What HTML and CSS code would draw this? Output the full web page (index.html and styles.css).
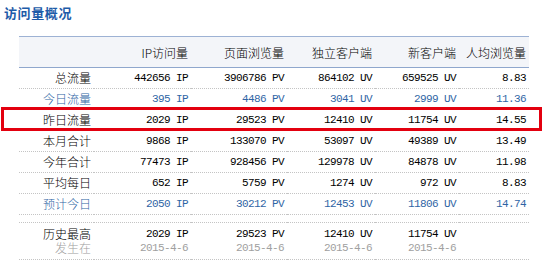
FILE: index.html
```html
<!DOCTYPE html>
<html lang="zh">
<head>
<meta charset="utf-8">
<title>访问量概况</title>
<link rel="stylesheet" href="styles.css">
</head>
<body>
<div class="page">
  <h1 class="title">访问量概况</h1>
  <table class="stats">
    <colgroup>
      <col class="c1"><col class="c2"><col class="c3"><col class="c4"><col class="c5"><col class="c6">
    </colgroup>
    <thead>
      <tr><th></th><th>IP访问量</th><th>页面浏览量</th><th>独立客户端</th><th>新客户端</th><th>人均浏览量</th></tr>
    </thead>
    <tbody>
      <tr><td class="label">总流量</td><td>442656 IP</td><td>3906786 PV</td><td>864102 UV</td><td>659525 UV</td><td>8.83</td></tr>
      <tr class="blue"><td class="label">今日流量</td><td>395 IP</td><td>4486 PV</td><td>3041 UV</td><td>2999 UV</td><td>11.36</td></tr>
      <tr><td class="label">昨日流量</td><td>2029 IP</td><td>29523 PV</td><td>12410 UV</td><td>11754 UV</td><td>14.55</td></tr>
      <tr><td class="label">本月合计</td><td>9868 IP</td><td>133070 PV</td><td>53097 UV</td><td>49389 UV</td><td>13.49</td></tr>
      <tr><td class="label">今年合计</td><td>77473 IP</td><td>928456 PV</td><td>129978 UV</td><td>84878 UV</td><td>11.98</td></tr>
      <tr><td class="label">平均每日</td><td>652 IP</td><td>5759 PV</td><td>1274 UV</td><td>972 UV</td><td>8.83</td></tr>
      <tr class="blue"><td class="label">预计今日</td><td>2050 IP</td><td>30212 PV</td><td>12453 UV</td><td>11806 UV</td><td>14.74</td></tr>
      <tr class="spacer"><td colspan="6"></td></tr>
      <tr class="record">
        <td class="label"><span class="main">历史最高</span><span class="sub">发生在</span></td>
        <td><span class="main">2029 IP</span><span class="sub">2015-4-6</span></td>
        <td><span class="main">29523 PV</span><span class="sub">2015-4-6</span></td>
        <td><span class="main">12410 UV</span><span class="sub">2015-4-6</span></td>
        <td><span class="main">11754 UV</span><span class="sub">2015-4-6</span></td>
        <td></td>
      </tr>
    </tbody>
  </table>
  <div class="highlight"></div>
</div>
</body>
</html>
```

FILE: styles.css
```css
html, body {
  margin: 0;
  padding: 0;
  background: #ffffff;
}

.page {
  position: relative;
  width: 545px;
  height: 262px;
  overflow: hidden;
  font-family: "Noto Sans CJK SC", "Liberation Sans", sans-serif;
  font-size: 12px;
  color: #000;
}

.title {
  margin: 0;
  padding: 5px 0 0 4px;
  font-size: 13px;
  letter-spacing: 0.6px;
  line-height: 16px;
  font-weight: bold;
  color: #1d5ba8;
}

.stats {
  margin: 15px 0 0 19px;
  width: 510px;
  border-collapse: collapse;
  table-layout: fixed;
}

.c1 { width: 75px; }
.c2 { width: 97px; }
.c3 { width: 96px; }
.c4 { width: 88px; }
.c5 { width: 84px; }
.c6 { width: 70px; }

.stats th {
  height: 30px;
  padding: 0 3px 0 0;
  text-align: right;
  font-weight: 300;
  font-size: 12px;
  background: #f3f5f9;
  border-top: 1px solid #9db2d4;
  border-bottom: 1px solid #8fa7cd;
  white-space: nowrap;
}

.stats td {
  height: 20px;
  padding: 0 3px 0 0;
  text-align: right;
  white-space: nowrap;
  border-bottom: 1px dotted #c4c4c4;
  font-family: "Liberation Mono", "Noto Sans CJK SC", monospace;
  font-size: 11px;
  letter-spacing: -0.6px;
  line-height: 20px;
}

.stats td.label {
  font-family: "Noto Sans CJK SC", "Liberation Sans", sans-serif;
  font-size: 12px;
  font-weight: 300;
  letter-spacing: 0;
}

.stats tr.blue td {
  color: #2f65a5;
}

.stats tr.spacer td {
  height: 7px;
  line-height: 7px;
  padding: 0;
}

.stats tr.record td {
  height: 30px;
  line-height: 14px;
  padding-top: 3px;
  padding-bottom: 3px;
  vertical-align: middle;
}

.stats tr.record .main,
.stats tr.record .sub {
  display: block;
}

.stats tr.record .sub {
  color: #a0a0a0;
}

.highlight {
  position: absolute;
  left: 1px;
  top: 107px;
  width: 541px;
  height: 24px;
  box-sizing: border-box;
  border: 3px solid #e3000f;
  pointer-events: none;
}
```
